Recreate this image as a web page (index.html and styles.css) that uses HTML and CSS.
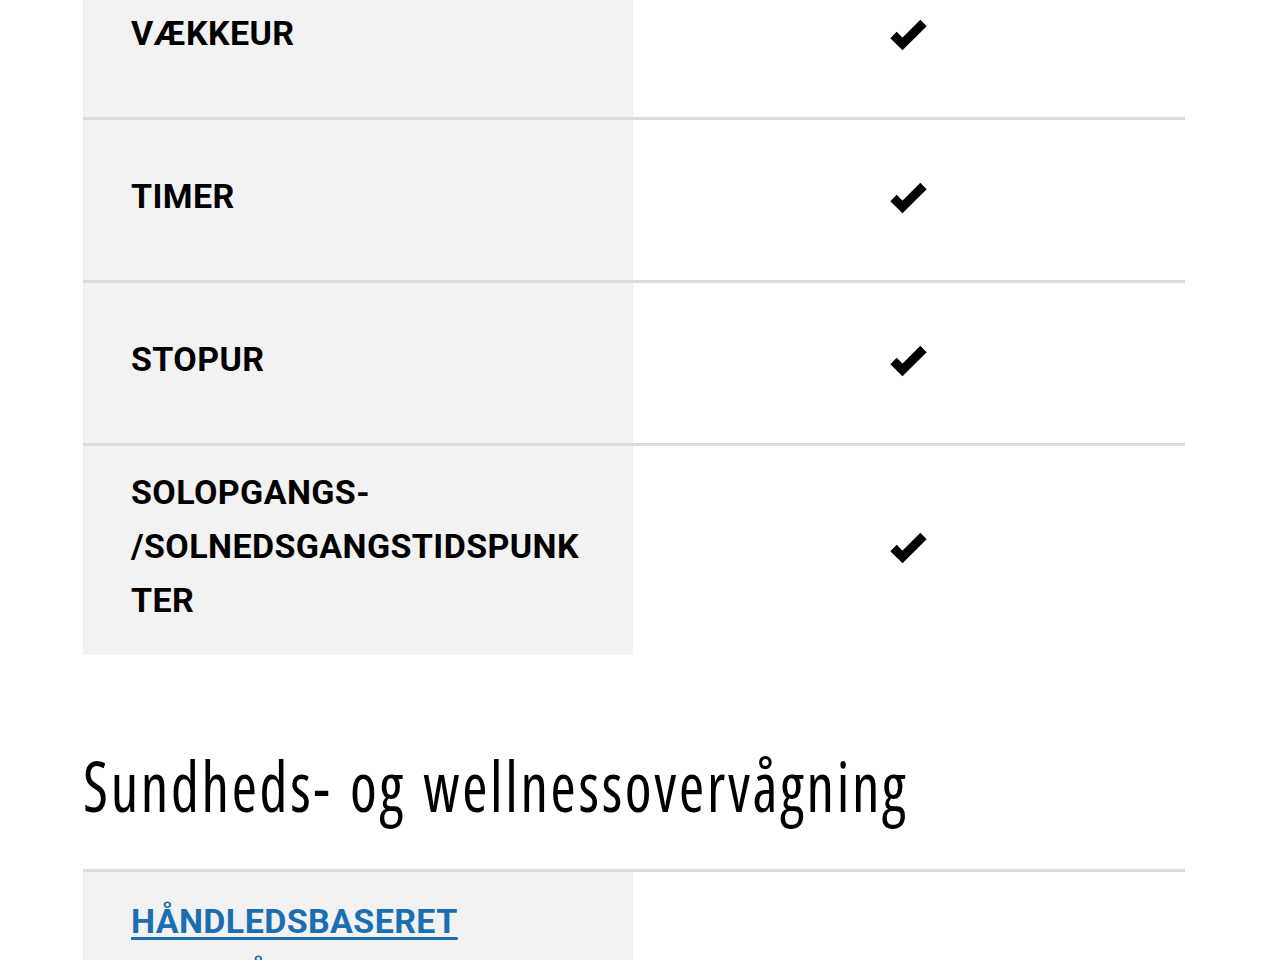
FILE: index.html
```html
<!DOCTYPE html>
<html lang="da">
<head>
<meta charset="utf-8">
<title>Specifikationer</title>
<link rel="stylesheet" href="styles.css">
</head>
<body>
<main class="page">
  <section class="spec spec--first">
    <div class="row">
      <div class="label">VÆKKEUR</div>
      <div class="value"><svg class="check" viewBox="0 0 38 32" aria-hidden="true"><polyline points="3.5,16 12.5,25 33.5,4" /></svg></div>
    </div>
    <div class="row">
      <div class="label">TIMER</div>
      <div class="value"><svg class="check" viewBox="0 0 38 32" aria-hidden="true"><polyline points="3.5,16 12.5,25 33.5,4" /></svg></div>
    </div>
    <div class="row">
      <div class="label">STOPUR</div>
      <div class="value"><svg class="check" viewBox="0 0 38 32" aria-hidden="true"><polyline points="3.5,16 12.5,25 33.5,4" /></svg></div>
    </div>
    <div class="row">
      <div class="label">SOLOPGANGS-<wbr>/SOLNEDSGANGSTIDSPUNK<wbr>TER</div>
      <div class="value"><svg class="check" viewBox="0 0 38 32" aria-hidden="true"><polyline points="3.5,16 12.5,25 33.5,4" /></svg></div>
    </div>
  </section>

  <h2 class="section-title"><span class="section-title__text">Sundheds- og wellnessovervågning</span></h2>

  <section class="spec">
    <div class="row">
      <div class="label"><a class="link" href="#">HÅNDLEDSBASERET PULSMÅLING</a></div>
      <div class="value"></div>
    </div>
  </section>
</main>
</body>
</html>
```

FILE: styles.css
```css
html, body {
  margin: 0;
  padding: 0;
  background: #ffffff;
}

body {
  font-family: Roboto, "Liberation Sans", sans-serif;
  color: #000;
}

.page {
  width: 1102px;
  margin-left: 83px;
}

.spec {
  display: flex;
  flex-direction: column;
}

.spec--first {
  margin-top: -46px;
}

.row {
  display: grid;
  grid-template-columns: 550px 552px;
  border-top: 3px solid #dcdcdc;
  min-height: 160px;
}

.label {
  background: #f2f2f2;
  padding: 19px 48px 28px 48px;
  font-size: 34px;
  font-weight: 700;
  letter-spacing: 0.4px;
  line-height: 54px;
  display: flex;
  align-items: center;
}

.value {
  display: flex;
  align-items: center;
  justify-content: center;
  padding-bottom: 5px;
}

.check {
  width: 38px;
  height: 32px;
  fill: none;
  stroke: #000;
  stroke-width: 9;
  stroke-linejoin: miter;
  stroke-linecap: butt;
}

.section-title {
  font-family: "Open Sans", "DejaVu Sans Condensed", sans-serif;
  font-stretch: 75%;
  font-weight: 500;
  font-size: 70px;
  line-height: 84px;
  margin: 88px 0 42px 0;
  color: #000;
  white-space: nowrap;
}

.section-title__text {
  display: inline-block;
  letter-spacing: 3.1px;
  word-spacing: 4px;
  transform: scaleX(0.87);
  transform-origin: left center;
}

.link {
  color: #1a6fb0;
  text-decoration: underline;
  text-decoration-thickness: 3px;
  text-underline-offset: 4px;
}
```
